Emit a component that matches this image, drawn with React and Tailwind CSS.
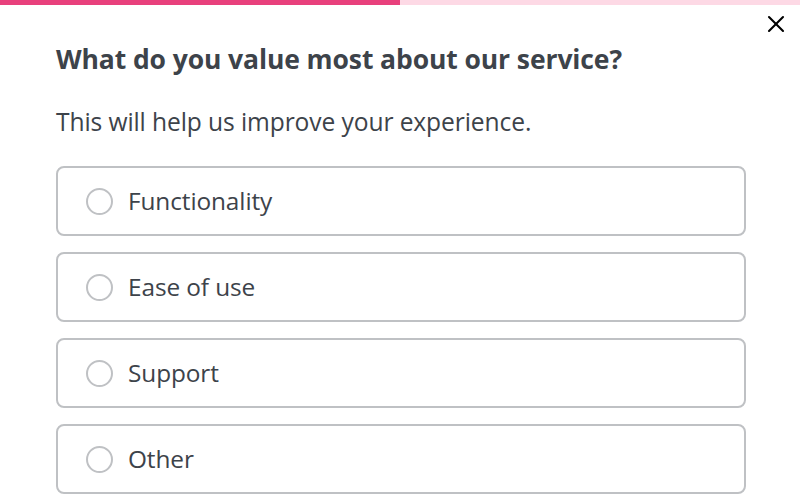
import { X } from "lucide-react";

const options = ["Functionality", "Ease of use", "Support", "Other"];

export default function App() {
  return (
    <div className="relative h-[502px] w-[800px] overflow-hidden bg-white font-['Open_Sans',sans-serif] text-[#3d434a]">
      {/* progress */}
      <div className="flex h-[5px] w-full bg-[#fdd9e5]">
        <div className="h-full w-1/2 bg-[#e8407c]" />
      </div>

      <button className="absolute left-[762px] top-[10px] text-black">
        <X size={28} strokeWidth={1.8} />
      </button>

      <div className="px-[56px] pt-[38px]">
        <h1 className="text-[26.5px] font-bold leading-[32px] tracking-[-0.1px]">
          What do you value most about our service?
        </h1>
        <p className="mt-[31px] text-[24.6px] leading-[32px] tracking-[-0.1px]">
          This will help us improve your experience.
        </p>

        <div className="mt-[28px] flex w-[690px] flex-col gap-[16px]">
          {options.map((opt) => (
            <label
              key={opt}
              className="flex h-[70px] items-center gap-[15px] rounded-[8px] border-2 border-[#bfc1c4] pl-[28px]"
            >
              <span className="h-[27px] w-[27px] rounded-full border-2 border-[#bfc1c4]" />
              <span className="text-[24.4px] leading-[32px] tracking-[-0.1px]">{opt}</span>
            </label>
          ))}
        </div>
      </div>
    </div>
  );
}
